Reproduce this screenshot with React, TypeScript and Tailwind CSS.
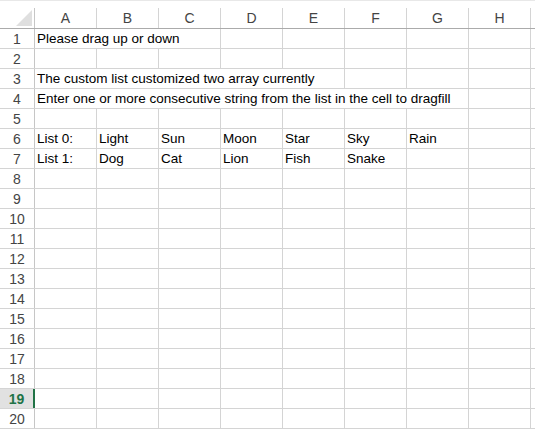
import React from 'react';

const cols = ['A', 'B', 'C', 'D', 'E', 'F', 'G', 'H'];

// each row: list of [text, span]; spans add up to 8 columns
type Cell = [string, number];

const rows: Cell[][] = [
  [['Please drag up or down', 3], ['', 1], ['', 1], ['', 1], ['', 1], ['', 1]],
  [],
  [['The custom list customized two array currently', 5], ['', 1], ['', 1], ['', 1]],
  [['Enter one or more consecutive string from the list in the cell to dragfill', 7], ['', 1]],
  [],
  [['List 0:', 1], ['Light', 1], ['Sun', 1], ['Moon', 1], ['Star', 1], ['Sky', 1], ['Rain', 1], ['', 1]],
  [['List 1:', 1], ['Dog', 1], ['Cat', 1], ['Lion', 1], ['Fish', 1], ['Snake', 1], ['', 1], ['', 1]],
];

const blankRow: Cell[] = cols.map(() => ['', 1]);

const widthClass: Record<number, string> = {
  1: 'w-[62px]',
  3: 'w-[186px]',
  5: 'w-[310px]',
  7: 'w-[434px]',
};

const ACTIVE_ROW = 19;

const App = () => {
  const allRows: Cell[][] = Array.from({ length: 20 }, (_, i) =>
    rows[i] && rows[i].length ? rows[i] : blankRow
  );

  return (
    <div
      className="w-[535px] h-[431px] overflow-hidden bg-white text-black"
      style={{ fontFamily: '"Liberation Sans", Arial, sans-serif' }}
    >
      {/* strip above the headers */}
      <div className="h-[8px] border-t border-[#e8e8e8]" />

      {/* column headers */}
      <div className="flex h-[21px] border-b border-[#ababab]">
        <div className="w-[35px] shrink-0 border-r border-[#c6c6c6] relative">
          <svg className="absolute right-[2px] bottom-[2px]" width="16" height="16" viewBox="0 0 16 16">
            <polygon points="16,0 16,16 0,16" fill="#dfdfdf" />
          </svg>
        </div>
        {cols.map(c => (
          <div
            key={c}
            className="w-[62px] shrink-0 border-r border-[#d4d4d4] flex items-center justify-center pt-[1px] text-[14px] text-[#444]"
          >
            {c}
          </div>
        ))}
        <div className="flex-1" />
      </div>

      {/* grid rows */}
      {allRows.map((cells, i) => {
        const n = i + 1;
        const active = n === ACTIVE_ROW;
        return (
          <div key={n} className="flex h-[20px] border-b border-[#d4d4d4]">
            <div
              className={
                active
                  ? 'w-[35px] shrink-0 border-r-2 border-[#217346] bg-[#e1e1e1] flex items-center justify-center pt-[1px] text-[14px] font-bold text-[#217346]'
                  : 'w-[35px] shrink-0 border-r border-[#c6c6c6] flex items-center justify-center pt-[1px] text-[14px] text-[#444]'
              }
            >
              {n}
            </div>
            {cells.map(([text, span], j) => (
              <div
                key={j}
                className={`${widthClass[span]} shrink-0 border-r border-[#d4d4d4] flex items-center pl-[2px] pt-[1px] text-[13.5px] whitespace-nowrap overflow-hidden`}
              >
                {text}
              </div>
            ))}
            <div className="flex-1" />
          </div>
        );
      })}
    </div>
  );
};

export default App;
